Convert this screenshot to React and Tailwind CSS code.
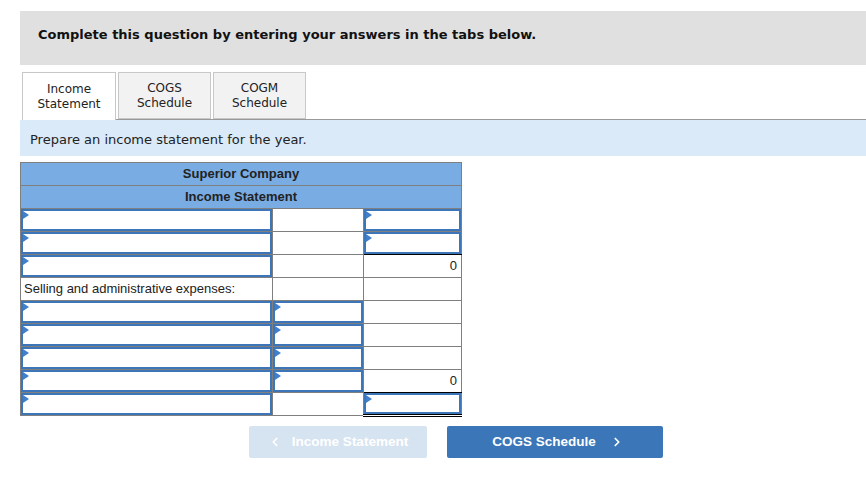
import { ChevronLeft, ChevronRight } from "lucide-react";

const verdana = { fontFamily: '"DejaVu Sans", Verdana, sans-serif' };
const arial = { fontFamily: '"Liberation Sans", Arial, sans-serif' };

const Field = () => (
  <div className="relative h-full w-full border-2 border-[#3d76b8] bg-white">
    <svg className="absolute left-0 top-0" width="6" height="8" viewBox="0 0 6 8">
      <path d="M0 0 L6 4 L0 8 Z" fill="#3f7fcb" />
    </svg>
  </div>
);

// each row: [col1, col2, col3, underline]; "in" = input field, string = text, null = empty
const rows = [
  ["in", null, "in"],
  ["in", null, "in", "single"],
  ["in", null, "0"],
  ["Selling and administrative expenses:", null, null],
  ["in", "in", null],
  ["in", "in", null],
  ["in", "in", null],
  ["in", "in", "0", "single"],
  ["in", null, "in", "double"],
];

const Cell = ({ value }) => {
  if (value === "in")
    return (
      <td className="h-[23px] border border-[#7f7f7f] p-0">
        <Field />
      </td>
    );
  return (
    <td className="h-[23px] border border-[#7f7f7f] px-[3px] py-0 text-[13px] text-[#222]">
      {value}
    </td>
  );
};

export default function App() {
  return (
    <div className="min-h-screen bg-white pl-[20px] pt-[11px]">
      {/* Question header */}
      <div className="h-[54px] bg-[#e0e0e0] pl-[18px] pt-[14px]" style={verdana}>
        <p className="text-[13px] font-bold text-[#111]">
          Complete this question by entering your answers in the tabs below.
        </p>
      </div>

      {/* Tabs */}
      <div className="mt-[7px] flex gap-[2px] pl-[2px]" style={verdana}>
        <div className="flex h-[48px] w-[94px] items-center justify-center border border-b-0 border-[#c8c8c8] bg-white text-center text-[12px] leading-[15px] text-[#222]">
          Income
          <br />
          Statement
        </div>
        <div className="flex h-[47px] w-[93px] items-center justify-center border border-[#c8c8c8] bg-[#f2f2f2] text-center text-[12px] leading-[15px] text-[#222]">
          COGS
          <br />
          Schedule
        </div>
        <div className="flex h-[47px] w-[93px] items-center justify-center border border-[#c8c8c8] bg-[#f2f2f2] text-center text-[12px] leading-[15px] text-[#222]">
          COGM
          <br />
          Schedule
        </div>
      </div>
      <div className="-mt-px ml-[96px] h-px bg-[#999]" />

      {/* Instructions */}
      <div className="flex h-[36px] items-center bg-[#daeaf8] pl-[10px] pt-[3px]" style={verdana}>
        <p className="text-[13px] text-[#222]">Prepare an income statement for the year.</p>
      </div>

      {/* Statement table */}
      <table className="mt-[6px] w-[442px] border-collapse" style={arial}>
        <colgroup>
          <col className="w-[253px]" />
          <col className="w-[91px]" />
          <col className="w-[98px]" />
        </colgroup>
        <tbody>
          <tr>
            <td colSpan={3} className="h-[23px] border border-[#7f7f7f] bg-[#78ace3] p-0 text-center text-[13px] font-bold text-[#222]">
              Superior Company
            </td>
          </tr>
          <tr>
            <td colSpan={3} className="h-[23px] border border-[#7f7f7f] bg-[#78ace3] p-0 text-center text-[13px] font-bold text-[#222]">
              Income Statement
            </td>
          </tr>
          {rows.map((r, i) => (
            <tr key={i}>
              <Cell value={r[0]} />
              <Cell value={r[1]} />
              {r[2] === "in" ? (
                <td
                  className={`h-[23px] border border-[#7f7f7f] p-0 ${r[3] === "double" ? "border-b-[3px] border-b-black [border-bottom-style:double]" : ""} ${r[3] === "single" ? "border-b-black" : ""}`}
                >
                  <Field />
                </td>
              ) : (
                <td
                  className={`h-[23px] border border-[#7f7f7f] px-[4px] py-0 text-right text-[13px] text-[#222] ${r[3] === "single" ? "border-b-black" : ""}`}
                >
                  {r[2]}
                </td>
              )}
            </tr>
          ))}
        </tbody>
      </table>

      {/* Navigation */}
      <div className="mt-[9px] flex gap-[20px] pl-[229px]" style={arial}>
        <button className="flex h-[32px] w-[178px] items-center justify-center gap-[10px] rounded-[2px] bg-[#d6e3f1] text-[13.5px] font-bold text-white">
          <ChevronLeft className="size-[14px]" strokeWidth={3} />
          Income Statement
        </button>
        <button className="flex h-[32px] w-[216px] items-center justify-center gap-[14px] rounded-[2px] bg-[#3a76b8] pl-[6px] text-[13.5px] font-bold text-white">
          COGS Schedule
          <ChevronRight className="size-[14px]" strokeWidth={3} />
        </button>
      </div>
    </div>
  );
}
